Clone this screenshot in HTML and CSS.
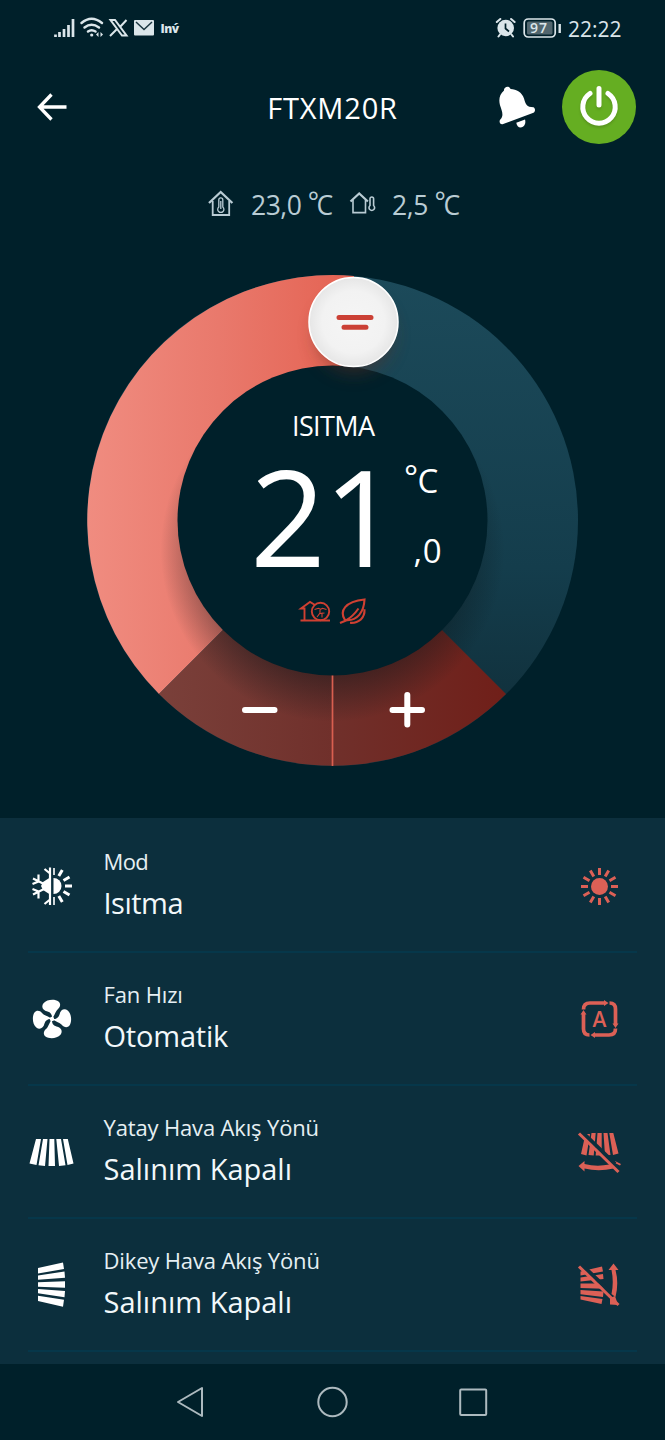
FILE: index.html
```html
<!DOCTYPE html>
<html lang="tr">
<head>
<meta charset="utf-8">
<title>FTXM20R</title>
<link rel="stylesheet" href="styles.css">
</head>
<body>
<div class="phone">
  <div class="status">
    <svg class="status-left" viewBox="50 12 132 32" width="132" height="32">
      <g fill="none" stroke="currentColor" stroke-width="2.700">
        <path d="M55.500 37v-2.500M59.500 37v-5M64 37v-8M68.500 37v-12M73 37v-18"/>
        <g stroke-linecap="round" stroke-width="2.500"><path d="M81.500 23q10-8.500 20.500 0M84.500 27.500q7-5.500 14.500 0M88 31.500q3.500-2.600 7.500 0"/></g>
        <circle cx="91.700" cy="35" r="1.600" fill="currentColor" stroke="none"/>
        <path d="M98.500 32l-2.500 2.500 2.500 2.500zM100.500 32l2.500 2.500-2.500 2.500z" fill="currentColor" stroke="none"/>
        <path d="M110.500 20h4.500l11.500 15.500h-4.500zM126.500 20l-7 7.500M117.500 28.500l-7.500 7.500" stroke-width="2"/>
      </g>
      <rect x="134" y="20" width="20" height="15.500" rx="1" fill="currentColor"/>
      <path d="M136 22l8 7.500 8-7.500" fill="none" stroke="#1b3640" stroke-width="1.500"/>
      <text class="status-brand" x="160.500" y="32.500" textLength="18.500">Inv́</text>
    </svg>
    <svg class="status-right" viewBox="492 12 132 32" width="132" height="32">
      <circle cx="505.700" cy="28" r="8.300" fill="currentColor"/>
      <path d="M505.500 23.500v5l3.500 3" fill="none" stroke="#00202a" stroke-width="1.700"/>
      <path d="M496.800 22l3.500-3M514.600 22l-3.500-3M500 34.500l-1.500 2M511.500 34.500l1.500 2" fill="none" stroke="currentColor" stroke-width="2" stroke-linecap="round"/>
      <rect x="524.200" y="19" width="31" height="18" rx="4" fill="none" stroke="currentColor" stroke-width="1.700"/>
      <rect x="527" y="21.500" width="25.500" height="13" rx="1.500" fill="#52666e"/>
      <path d="M559.700 24v9" stroke="currentColor" stroke-width="2.400"/>
      <text class="status-battery" x="530" y="32.500" textLength="17">97</text>
      <text class="status-clock" x="568" y="36.500" textLength="53.500" lengthAdjust="spacingAndGlyphs">22:22</text>
    </svg>
  </div>

  <header class="header">
    <svg class="back" viewBox="36 91 32 32" width="32" height="32"><path d="M66.500 107H40M51.500 94.500L39.500 107l12 12.500" fill="none" stroke="#fff" stroke-width="3.300"/></svg>
    <h1 class="title">FTXM20R</h1>
    <svg class="bell" viewBox="497 85 40 44" width="40" height="44">
      <path d="M504 90.500C503.500 87 509 85 510.500 89c6 0 11.500 3.500 13.500 9.500 1.600 6 2.500 8.500 9.500 8.800 2 1 2 4.500 0 5.400L502.500 124.300c-2.500.5-4-3-2-5 3.500-4 1.500-8-.5-14-1.500-6-.5-11 4-14.800z" fill="#fff"/>
      <path d="M516.300 122.800l8.700-3.300c1.300 4-1 8-4.500 8-2.200 0-3.700-1.800-4.200-4.700z" fill="#fff"/>
    </svg>
    <div class="power">
      <svg viewBox="-22 -22 44 44" width="44" height="44" fill="none" stroke="#fff" stroke-width="5" stroke-linecap="round"><path d="M-9-13.500A16.200 16.200 0 1 0 9-13.500M0-18.500V-2"/></svg>
    </div>
  </header>

  <div class="temps">
    <svg viewBox="207 188 28 30" width="28" height="30" fill="none" stroke="currentColor">
      <path d="M209 203l11.700-11 11.700 11" stroke-width="2.300"/><path d="M212.700 201v14h16.500v-14" stroke-width="1.800"/>
      <path d="M218.800 207v-7.200a2 2 0 0 1 4 0v7.200a3.100 3.100 0 1 1-4 0zM220.800 201v8" stroke-width="1.300"/>
    </svg>
    <span class="indoor">23,0 <span class="deg">°</span>C</span>
    <svg viewBox="349 188 28 30" width="28" height="30" fill="none" stroke="currentColor">
      <path d="M350.500 201.500l8.700-8 8.700 8" stroke-width="2.200"/><path d="M353 200v12.600h12.500V200" stroke-width="1.600"/>
      <path d="M370 205.500v-6.700a1.800 1.800 0 0 1 3.600 0v6.700a2.800 2.800 0 1 1-3.600 0z" stroke-width="1.600"/>
    </svg>
    <span class="outdoor">2,5 <span class="deg">°</span>C</span>
  </div>

  <svg class="dial" viewBox="0 248 665 570" width="665" height="570">
    <defs>
      <linearGradient id="warm" gradientUnits="userSpaceOnUse" x1="88" y1="0" x2="350" y2="0"><stop offset="0" stop-color="#f08c80"/><stop offset=".5" stop-color="#e9796c"/><stop offset="1" stop-color="#e46353"/></linearGradient>
      <linearGradient id="cool" gradientUnits="userSpaceOnUse" x1="0" y1="276" x2="0" y2="693"><stop offset="0" stop-color="#1c4a5a"/><stop offset=".7" stop-color="#143d4c"/><stop offset="1" stop-color="#11323e"/></linearGradient>
      <linearGradient id="step" gradientUnits="userSpaceOnUse" x1="160" y1="0" x2="505" y2="0"><stop offset="0" stop-color="#7a403a"/><stop offset=".5" stop-color="#70302b"/><stop offset="1" stop-color="#701f19"/></linearGradient>
      <radialGradient id="knob"><stop offset="0" stop-color="#f5f5f5"/><stop offset=".7" stop-color="#f2f2f2"/><stop offset="1" stop-color="#e6e6e6"/></radialGradient>
      <radialGradient id="shade" gradientUnits="userSpaceOnUse" cx="332.500" cy="550" r="172"><stop offset=".74" stop-color="#0a1418" stop-opacity=".42"/><stop offset="1" stop-color="#0a1418" stop-opacity="0"/></radialGradient>
      <filter id="glow" x="-60%" y="-60%" width="220%" height="220%"><feGaussianBlur stdDeviation="9"/></filter>
    </defs>
    <circle cx="332.500" cy="520.500" r="245.500" fill="url(#cool)"/>
    <path d="M332.500 520.500L159 694A245.500 245.500 0 0 1 354 276z" fill="url(#warm)"/>
    <path d="M332.500 520.500L159 694A245.500 245.500 0 0 0 506 694z" fill="url(#step)"/>
    <circle cx="332.500" cy="550" r="172" fill="url(#shade)"/>
    <circle cx="332.500" cy="520.500" r="155" fill="#00202a"/>
    <path d="M332.500 675.500V766" stroke="#d95f50" stroke-width="1.700"/>
    <circle cx="354" cy="335" r="38" fill="#622d22" opacity=".5" filter="url(#glow)"/>
    <circle cx="353.500" cy="322" r="44.500" fill="url(#knob)" stroke="#fff" stroke-width="1.500"/>
    <path d="M339 317.500h32M344 327.300h22" stroke="#cb4035" stroke-width="5" stroke-linecap="round"/>
    <path d="M245 710h29.500M392.500 710h29.500M407.300 695v29.500" stroke="#fff" stroke-width="6" stroke-linecap="round"/>
    <text class="dial-mode" x="292" y="436" textLength="83">ISITMA</text>
    <text class="dial-value" x="250" y="567">2</text>
    <text class="dial-value" x="323.500" y="567">1</text>
    <text class="dial-unit" x="404" y="489">°<tspan x="417.500" y="492.500">C</tspan></text>
    <text class="dial-unit" x="413.500" y="562.500" textLength="28">,0</text>
    <g fill="none" stroke="#cf4032" stroke-width="1.900">
      <path d="M300.500 620.500h29.500M304.500 620v-11.500h-3.500l9-6.500 5 3"/>
      <circle cx="320.500" cy="611.500" r="8.700"/>
      <path d="M314.500 609.500l4-1.200 2 1 2-1 4 1.200M320 610v3l-3 4M322 612.500v5M319.500 613.500l5-.5" stroke-width="1.100"/>
      <path d="M345 620c-6-9 0-18.500 19.500-20.500-.5 12-7 22-19.500 20.500zM340 623l6-2.500c5-3 9-7 12.500-12M350 622.800c9 .5 15-5 14.500-13.500" stroke-width="2.100"/>
    </g>
  </svg>

  <main class="panel">
    <section class="row">
      <svg class="icon" viewBox="28 862 48 48" fill="none" stroke="currentColor" stroke-width="2.200">
        <path d="M50 867.500v37.500M50 873.500l-5.500-4.500M50 899.500l-5.500 4.500M33 878.500l12 6M33 894.500l12-6M38.500 874.500v7l-6 2.500M38.500 898.500v-7l-6-2.500"/>
        <path d="M50 877.500l-7 4.500-2 4 2 4 7 4.500z" fill="currentColor" stroke="none"/>
        <path d="M53.500 878a8 8 0 0 1 0 16z" fill="currentColor" stroke="none"/>
        <path d="M54 868v7M54 897v8" stroke-width="1.600"/>
        <path d="M58.800 876l3.500-6M63.500 880.500l6-3.500M65 886h7M63.500 891.500l6 3.500M58.800 896l3.500 6" stroke-width="3"/>
      </svg>
      <div class="copy"><span class="label mode-label">Mod</span><span class="value mode-value">Isıtma</span></div>
      <svg class="icon state" viewBox="-24.500 -24.500 48 48" stroke="currentColor" stroke-width="3">
        <circle r="8.500" fill="currentColor" stroke="none"/>
        <path d="M0-18.500v7M0 18.500v-7M-18.500 0h7M18.500 0h-7M9.200-16l-3.500 6M-9.200-16l3.500 6M9.200 16l-3.500-6M-9.200 16l3.500-6M16-9.200l-6 3.500M-16-9.200l6 3.500M16 9.200l-6-3.500M-16 9.200l6-3.500"/>
      </svg>
    </section>
    <section class="row">
      <svg class="icon" viewBox="-24 -24 48 48" fill="currentColor">
        <defs><path id="blade" d="M0 0C.5-4-1-6.500-4.500-7.500-9.500-8.500-11-12.500-8.500-15.700-5-19.800 3-20 6.500-17.500 9-15.500 8.500-12 6-10 3.500-8 3-4 0 0z"/></defs>
        <circle r="2.200"/><use href="#blade"/><use href="#blade" transform="rotate(90)"/><use href="#blade" transform="rotate(180)"/><use href="#blade" transform="rotate(270)"/>
      </svg>
      <div class="copy"><span class="label fan-label">Fan Hızı</span><span class="value fan-value">Otomatik</span></div>
      <svg class="icon state" viewBox="-24.500 -24 48 48" fill="none" stroke="currentColor" stroke-width="3.700">
        <path d="M-16-9.500q0-6.500 6.500-6.500H5M10-16q6 0 6 6V5M16 9.500q0 6.500-6.500 6.500H-5M-10 16q-6 0-6-6V-5"/>
        <path d="M4.500-19l4.500 3-4.500 3zM19 4.500l-3 4.500-3-4.500zM-4.500 19l-4.500-3 4.500-3zM-19-4.500l3-4.500 3 4.500z" fill="currentColor" stroke="none"/>
        <text class="auto" x="0" y="7.700" text-anchor="middle">A</text>
      </svg>
    </section>
    <section class="row">
      <svg class="icon" viewBox="28 1128 48 48" fill="currentColor">
        <path d="M36 1139h5l-4.500 26-7-1.500zM43 1139h4.500l-2.500 27-6.500-.7zM49.500 1139h4.800l.7 27h-6.500zM56.300 1139h4.700l4.500 26.300-6.500.7zM63 1139h4.800l5.700 24.500-6 1.500z"/>
      </svg>
      <div class="copy"><span class="label swing-label">Yatay Hava Akış Yönü</span><span class="value swing-value">Salınım Kapalı</span></div>
      <svg class="icon state" viewBox="574 1128 48 48" fill="currentColor">
        <path d="M584.500 1134h4.500l-3.500 21.500-5.500-1.500zM590.500 1133h4.200l-2 22.500-5.200-.5zM596.500 1133h4.200v22.500h-6zM602.500 1133h4l3 22-5.500.5zM608.300 1133h4l5.200 20.500-5.500 1.500z"/>
        <path d="M577.500 1166l6-5v3q12 3 25 .5l4 4q-15 3.500-29 0v3zM614 1161l6 3-1 1.500-5-2.500z"/>
        <path class="gap" d="M580.500 1131.500L614 1164"/>
        <path class="slash" d="M578 1133.500L617.500 1172"/>
      </svg>
    </section>
    <section class="row">
      <svg class="icon" viewBox="28 1261 48 48" fill="currentColor">
        <path d="M38 1268l25-5.500 1 6.500-26 4.500zM38 1275.500l26.500-4 .5 6.300-27 2zM38 1282.200l27-1v6.500l-27-1zM38 1289l27 2-.5 6.300-26.500-4zM38 1295.800l26 4-1 7-25-5.800z"/>
      </svg>
      <div class="copy"><span class="label swing-label">Dikey Hava Akış Yönü</span><span class="value swing-value">Salınım Kapalı</span></div>
      <svg class="icon state" viewBox="574 1261 48 48" fill="currentColor">
        <path d="M579.500 1271.500l21.500-5 1 5-22.500 4zM579.500 1277.500l22.500-3.500.5 5-23 2.500zM579.500 1283.500h23v5.300l-23-.8zM579.500 1290l23 1.500-.5 5.500-22.500-2.800zM579.500 1296l22 3-1 5-21-4.500z"/>
        <path class="gap" d="M580.500 1264.500L608 1291"/>
        <path d="M612.500 1263.500l5 6.500h-3q3.500 13 0 27l-4-3q2.500-12 0-24h-3z"/>
        <path class="slash" d="M578 1266.500L617.500 1305"/>
        <path d="M609 1298l5-2 3 9-8-.5z"/>
      </svg>
    </section>
  </main>

  <nav class="nav">
    <svg viewBox="175 1384 30 36" width="30" height="36"><path d="M178 1402l24-14v28z"/></svg>
    <svg viewBox="316 1384 33 36" width="33" height="36"><circle cx="333.500" cy="1402" r="14.200"/></svg>
    <svg viewBox="458 1384 30 36" width="30" height="36"><rect x="460.200" y="1389.500" width="26" height="25.500" rx="1"/></svg>
  </nav>
</div>
</body>
</html>
```

FILE: styles.css
```css
* { box-sizing: border-box; }
body { margin: 0; background: #00202a; color: #fff; font-family: "Open Sans", "Noto Sans", sans-serif; }
.phone { width: 665px; height: 1440px; display: flex; flex-direction: column; overflow: hidden; }
svg { display: block; flex: none; }

.status { height: 56px; flex: none; display: flex; justify-content: space-between; padding: 12px 41px 0 50px; color: #dbe6ea; }
.status text { fill: currentColor; }
.status-brand { font-size: 12px; font-weight: 800; }
.status-battery { font-size: 14px; font-weight: 600; }
.status-clock { font-size: 22.5px; }

.header { height: 102px; flex: none; display: grid; grid-template-columns: 200px 265px 62px 1fr; align-items: center; padding-right: 29px; }
.back { margin-left: 36px; }
.title { margin: 2px 0 0; text-align: center; font-size: 29px; line-height: 36px; font-weight: 500; letter-spacing: 0.8px; }
.bell { margin-left: 32px; }
.power { justify-self: end; width: 74px; height: 74px; border-radius: 50%; background: #65ae22; display: grid; place-items: center; }
.power svg { filter: drop-shadow(0 2px 1px rgb(60 90 20 / .3)); }

.temps { height: 90px; flex: none; display: flex; padding: 30px 0 0 207px; color: #b9ccd4; font-size: 26.5px; line-height: 35px; white-space: nowrap; }
.indoor { width: 98px; margin-left: 16px; letter-spacing: -0.5px; }
.outdoor { margin-left: 15px; letter-spacing: -0.4px; }
.deg { position: relative; top: -3px; margin-right: -2px; }

.dial { display: block; }
.dial text { fill: #fff; }
.dial-mode { font-size: 27px; }
.dial-value { font-size: 133px; font-weight: 500; }
.dial-unit { font-size: 33px; }

.panel { height: 546px; flex: none; padding-top: 2px; background: #0c2f3d; overflow: hidden; }
.row { height: 133px; margin: 0 28px; display: grid; grid-template-columns: 75.5px 1fr 62.5px; align-items: center; border-bottom: 2px solid #06374a; }
.icon { width: 48px; height: 48px; margin-bottom: 0; }
.state { color: #dc6056; }
.gap { stroke: #0c2f3d; stroke-width: 4; }
.slash { stroke: currentColor; stroke-width: 3; }
.copy { display: flex; flex-direction: column; white-space: nowrap; padding-bottom: 7px; }
.label { font-size: 22px; line-height: 41px; color: #e6eff3; letter-spacing: -0.15px; }
.value { font-size: 29px; line-height: 42px; color: #f2f8fa; }
.mode-label { letter-spacing: -0.6px; }
.mode-value { letter-spacing: -0.5px; }
.fan-value { letter-spacing: -0.2px; }
.auto { font-size: 21px; font-weight: 600; fill: currentColor; stroke: none; }

.nav { height: 76px; flex: none; display: flex; justify-content: space-between; padding: 20px 177px 0 175px; }
.nav svg { fill: none; stroke: #adbabf; stroke-width: 2; stroke-linejoin: round; }
```
